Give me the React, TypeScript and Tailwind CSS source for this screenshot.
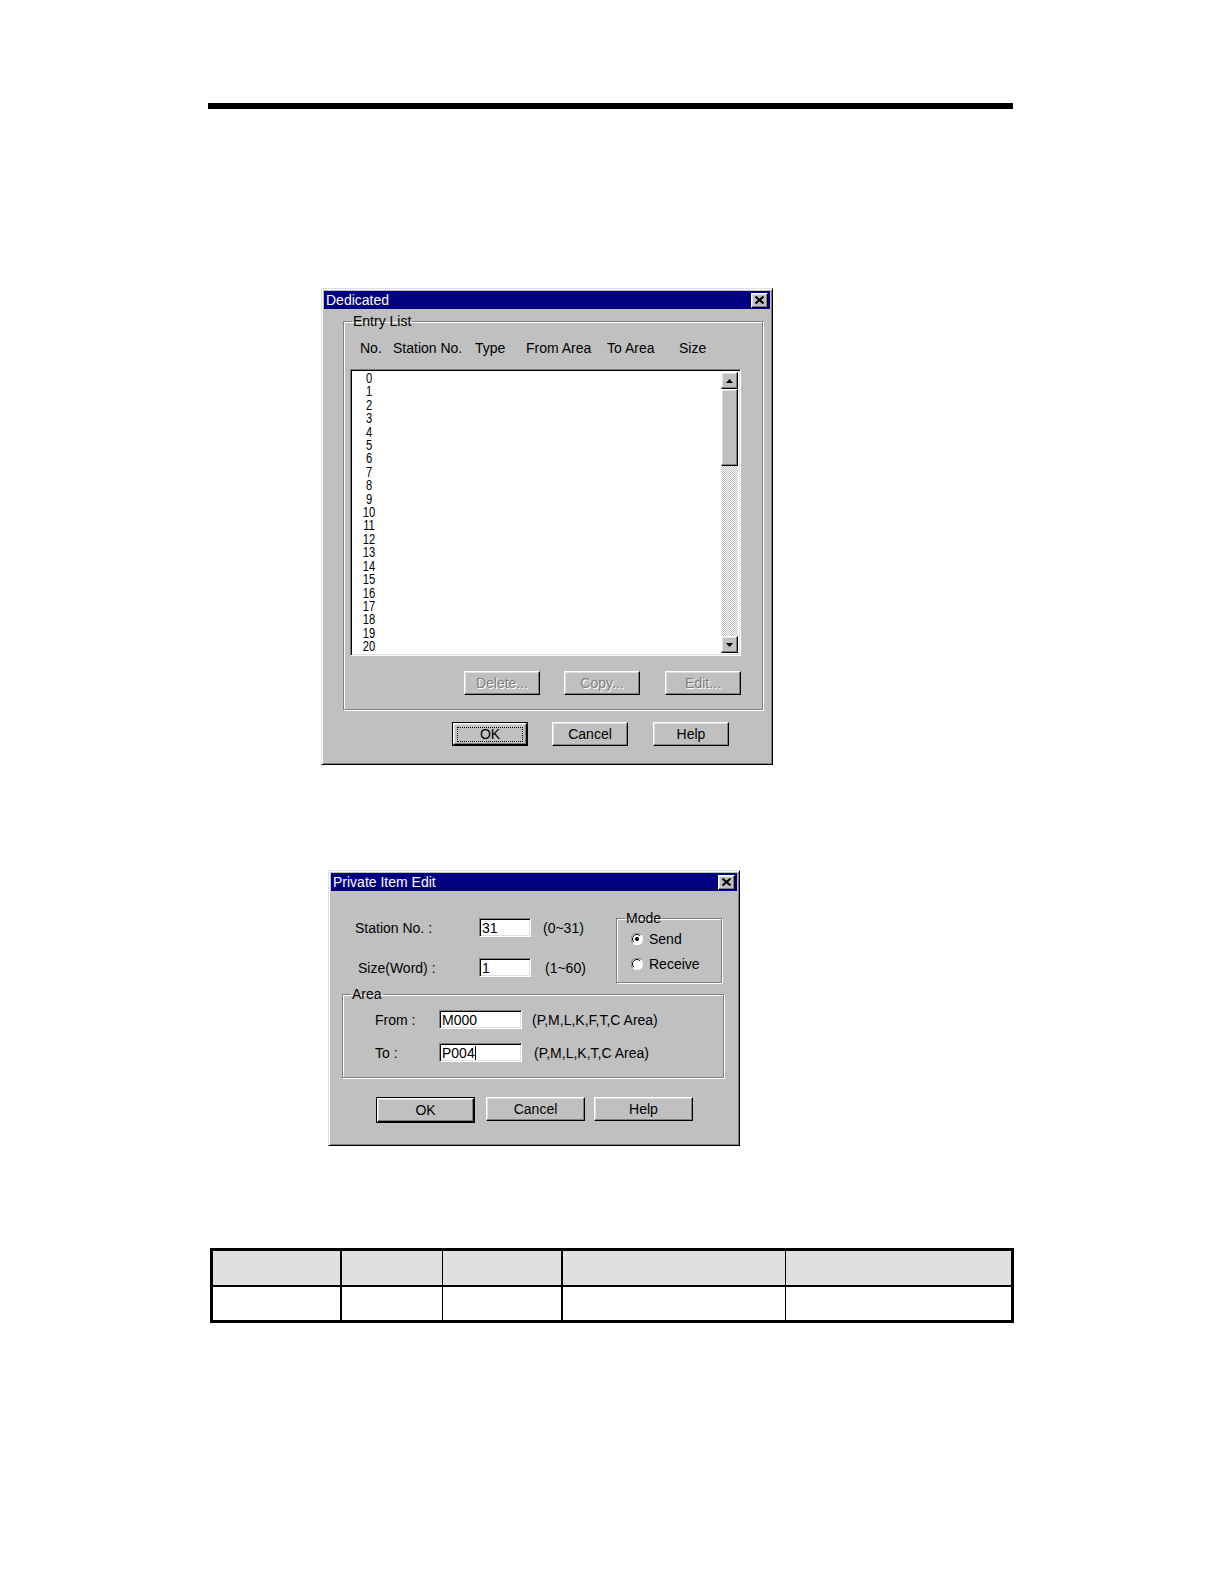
import type { ReactNode } from 'react'

const raised =
  'border border-t-white border-l-white border-b-black border-r-black shadow-[inset_-1px_-1px_0_#808080,inset_1px_1px_0_#dfdfdf]'
const sunken =
  'border border-t-[#808080] border-l-[#808080] border-b-white border-r-white shadow-[inset_1px_1px_0_#000,inset_-1px_-1px_0_#dfdfdf]'
const etched = 'border border-[#808080] shadow-[inset_1px_1px_0_#fff,1px_1px_0_#fff]'
const frame =
  'border border-t-[#dfdfdf] border-l-[#dfdfdf] border-b-black border-r-black bg-[#c0c0c0] shadow-[inset_1px_1px_0_#fff,inset_-1px_-1px_0_#808080] p-[2px]'

function CloseBox() {
  return (
    <div className={`${raised} flex h-[15px] w-[17px] items-center justify-center bg-[#c0c0c0]`}>
      <svg width="9" height="8" viewBox="0 0 9 8">
        <path d="M0.5 0.5 L8.5 7.5 M8.5 0.5 L0.5 7.5" stroke="#000" strokeWidth="2" />
      </svg>
    </div>
  )
}

function TitleBar({ title }: { title: string }) {
  return (
    <div className="flex h-[18px] items-center justify-between bg-[#000080] pl-[2px] pr-[2px]">
      <span className="text-[14px] leading-[18px] text-white">{title}</span>
      <CloseBox />
    </div>
  )
}

function Button({
  label,
  width,
  disabled,
  focused,
  isDefault,
  className = '',
}: {
  label: string
  width: number
  disabled?: boolean
  focused?: boolean
  isDefault?: boolean
  className?: string
}) {
  return (
    <div
      className={`h-[24px] shrink-0 ${isDefault || focused ? 'border border-black' : ''} ${className}`}
      style={{ width }}
    >
      <div
        className={`${raised} flex h-full w-full items-center justify-center bg-[#c0c0c0] text-[14px] ${
          disabled ? 'text-[#808080] [text-shadow:1px_1px_0_#fff]' : 'text-black'
        }`}
      >
        {focused ? (
          <span className="flex h-[15px] w-[66px] items-center justify-center border border-dotted border-black leading-none">
            {label}
          </span>
        ) : (
          label
        )}
      </div>
    </div>
  )
}

function Legend({ children, className = '' }: { children: ReactNode; className?: string }) {
  return (
    <legend className={`px-[1px] text-[14px] leading-[16px] ${className}`}>{children}</legend>
  )
}

function Arrow({ down }: { down?: boolean }) {
  return (
    <div className={`${raised} flex h-[17px] w-[17px] shrink-0 items-center justify-center bg-[#c0c0c0]`}>
      <svg width="7" height="4" viewBox="0 0 7 4">
        <path d={down ? 'M0 0 H7 L3.5 4 Z' : 'M0 4 H7 L3.5 0 Z'} fill="#000" />
      </svg>
    </div>
  )
}

function Radio({ checked, label }: { checked?: boolean; label: string }) {
  return (
    <div className="flex h-[16px] items-center">
      <svg width="12" height="12" viewBox="0 0 12 12" className="shrink-0">
        <circle cx="6" cy="6" r="5.5" fill="#fff" />
        <path d="M10.2 1.8 A5.5 5.5 0 0 0 1.8 10.2" stroke="#808080" fill="none" />
        <path d="M9.2 2.8 A4.5 4.5 0 0 0 2.8 9.2" stroke="#000" fill="none" />
        <path d="M1.8 10.2 A5.5 5.5 0 0 0 10.2 1.8" stroke="#fff" fill="none" />
        {checked && <circle cx="6" cy="6" r="2" fill="#000" />}
      </svg>
      <span className="ml-[6px] text-[14px] leading-[16px]">{label}</span>
    </div>
  )
}

function Field({ value, width, caret }: { value: string; width: number; caret?: boolean }) {
  return (
    <div
      className={`${sunken} flex h-[19px] shrink-0 items-center bg-white pl-[2px] text-[14px] leading-none`}
      style={{ width }}
    >
      <span>{value}</span>
      {caret && <span className="h-[14px] w-[1px] bg-black" />}
    </div>
  )
}

function DedicatedDialog() {
  const rows = Array.from({ length: 21 }, (_, i) => i)
  return (
    <div className={`${frame} ml-[321px] mt-[179px] w-[452px]`}>
      <TitleBar title="Dedicated" />
      <div className="pb-[16px] pt-[4px]">
        <fieldset className={`${etched} ml-[19px] w-[408px]`}>
          <Legend className="ml-[8px]">Entry List</Legend>
          <div className="pb-[14px] pl-[6px] pr-[21px]">
            <div className="ml-[10px] mt-[11px] flex text-[14px] leading-[16px]">
              <span className="w-[33px]">No.</span>
              <span className="w-[82px]">Station No.</span>
              <span className="w-[51px]">Type</span>
              <span className="w-[81px]">From Area</span>
              <span className="w-[72px]">To Area</span>
              <span>Size</span>
            </div>
            <div className={`${sunken} mt-[13px] flex h-[287px] w-[391px] bg-white`}>
              <div className="flex-1 overflow-hidden pl-[5px] pt-[2px]">
                <div className="w-[26px] scale-x-[0.8] text-center text-[14px] leading-[13.4px]">
                  {rows.map((n) => (
                    <div key={n}>{n}</div>
                  ))}
                </div>
              </div>
              <div className="m-[2px] ml-0 flex w-[17px] flex-col">
                <Arrow />
                <div className={`${raised} h-[77px] shrink-0 bg-[#c0c0c0]`} />
                <div className="flex-1 bg-[repeating-conic-gradient(#c0c0c0_0_25%,#fff_0_50%)] bg-[length:2px_2px]" />
                <Arrow down />
              </div>
            </div>
            <div className="mt-[15px] flex justify-end">
              <Button label="Delete..." width={76} disabled />
              <Button label="Copy..." width={76} disabled className="ml-[24px]" />
              <Button label="Edit..." width={76} disabled className="ml-[25px]" />
            </div>
          </div>
        </fieldset>
        <div className="mt-[12px] flex justify-end pr-[41px]">
          <Button label="OK" width={76} focused />
          <Button label="Cancel" width={76} className="ml-[24px]" />
          <Button label="Help" width={76} className="ml-[25px]" />
        </div>
      </div>
    </div>
  )
}

function PrivateItemDialog() {
  return (
    <div className={`${frame} ml-[328px] mt-[105px] w-[412px]`}>
      <TitleBar title="Private Item Edit" />
      <div className="pb-[20px] pt-[19px] text-[14px] leading-[16px]">
        <div className="flex">
          <div className="w-[285px] pt-[8px]">
            <div className="flex h-[19px] items-center">
              <span className="ml-[24px] w-[124px]">Station No. :</span>
              <Field value="31" width={52} />
              <span className="ml-[12px]">(0~31)</span>
            </div>
            <div className="mt-[21px] flex h-[19px] items-center">
              <span className="ml-[27px] w-[121px]">Size(Word) :</span>
              <Field value="1" width={52} />
              <span className="ml-[14px]">(1~60)</span>
            </div>
          </div>
          <fieldset className={`${etched} w-[106px]`}>
            <Legend className="ml-[8px]">Mode</Legend>
            <div className="pb-[10px] pl-[14px]">
              <div className="mt-[5px]">
                <Radio checked label="Send" />
              </div>
              <div className="mt-[9px]">
                <Radio label="Receive" />
              </div>
            </div>
          </fieldset>
        </div>
        <fieldset className={`${etched} ml-[11px] mt-[3px] w-[382px]`}>
          <Legend className="ml-[8px]">Area</Legend>
          <div className="pb-[15px] pl-[32px]">
            <div className="mt-[8px] flex h-[19px] items-center">
              <span className="w-[64px]">From :</span>
              <Field value="M000" width={83} />
              <span className="ml-[10px]">(P,M,L,K,F,T,C Area)</span>
            </div>
            <div className="mt-[14px] flex h-[19px] items-center">
              <span className="w-[64px]">To :</span>
              <Field value="P004" width={83} caret />
              <span className="ml-[12px]">(P,M,L,K,T,C Area)</span>
            </div>
          </div>
        </fieldset>
        <div className="ml-[45px] mt-[19px] flex">
          <div className="border border-black">
            <Button label="OK" width={97} className="h-[22px]" />
          </div>
          <Button label="Cancel" width={99} className="ml-[11px]" />
          <Button label="Help" width={99} className="ml-[9px]" />
        </div>
      </div>
    </div>
  )
}

function SpecTable() {
  const cols = [
    { w: 129, edge: 'border-r-2' },
    { w: 102, edge: 'border-r' },
    { w: 119, edge: 'border-r-2' },
    { w: 224, edge: 'border-r' },
    { w: 227, edge: '' },
  ]
  return (
    <table className="ml-[210px] mt-[102px] w-[801px] table-fixed border-collapse border-[3px] border-black">
      <tbody>
        <tr className="h-[36px] border-b-2 border-black bg-[#e0e0e0]">
          {cols.map((c, i) => (
            <td key={i} className={`${c.edge} border-black p-0`} style={{ width: c.w }} />
          ))}
        </tr>
        <tr className="h-[36px]">
          {cols.map((c, i) => (
            <td key={i} className={`${c.edge} border-black p-0`} />
          ))}
        </tr>
      </tbody>
    </table>
  )
}

export default function App() {
  return (
    <div className="min-h-[1584px] w-[1224px] bg-white pt-[103px] font-['Liberation_Sans',Arial,sans-serif] text-black">
      <div className="ml-[208px] h-[6px] w-[805px] bg-black" />
      <DedicatedDialog />
      <PrivateItemDialog />
      <SpecTable />
    </div>
  )
}
